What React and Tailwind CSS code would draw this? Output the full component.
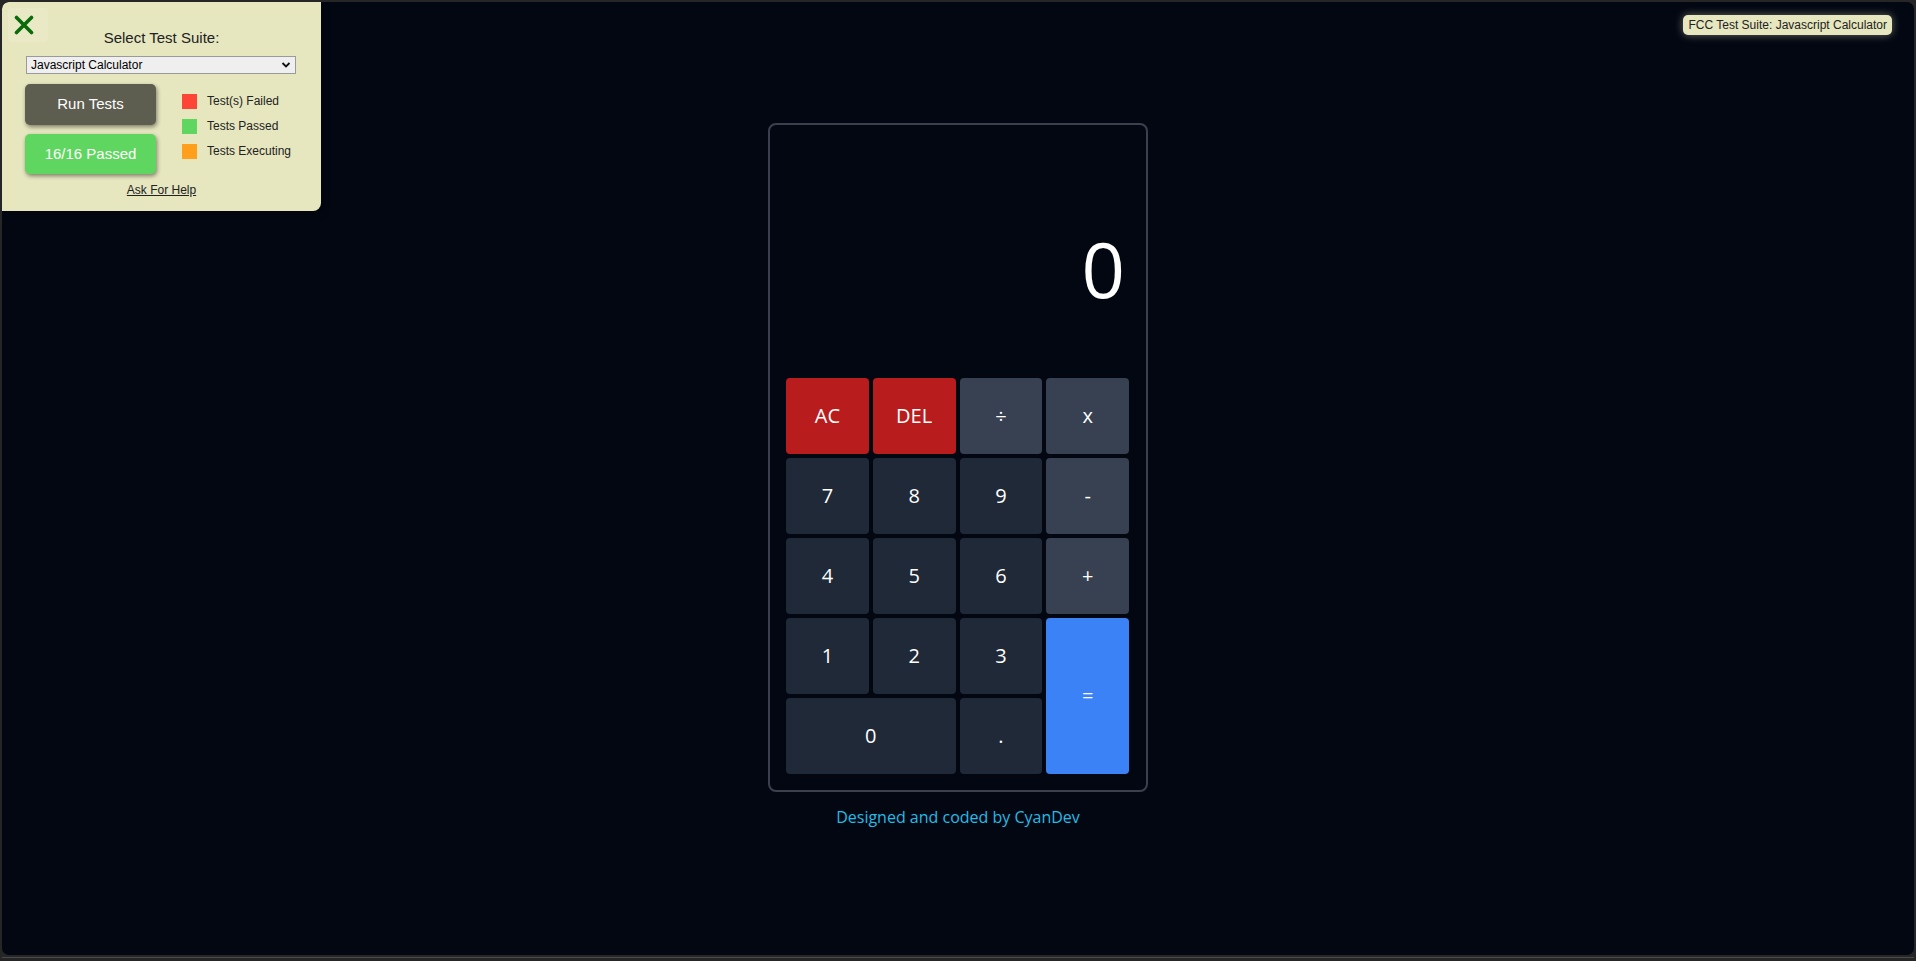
import { useState } from "react";

// Calculator keys, in grid order
const KEYS = [
  { id: "clear", label: "AC", kind: "danger" },
  { id: "delete", label: "DEL", kind: "danger" },
  { id: "divide", label: "÷", kind: "op" },
  { id: "multiply", label: "x", kind: "op" },
  { id: "seven", label: "7" },
  { id: "eight", label: "8" },
  { id: "nine", label: "9" },
  { id: "subtract", label: "-", kind: "op" },
  { id: "four", label: "4" },
  { id: "five", label: "5" },
  { id: "six", label: "6" },
  { id: "add", label: "+", kind: "op" },
  { id: "one", label: "1" },
  { id: "two", label: "2" },
  { id: "three", label: "3" },
  { id: "equals", label: "=", kind: "equals" },
  { id: "zero", label: "0", kind: "wide" },
  { id: "decimal", label: "." },
];

function keyClass(kind) {
  if (kind === "danger") return "bg-[#b91c1c]";
  if (kind === "op") return "bg-[#374151]";
  if (kind === "equals") return "bg-[#3b82f6] row-span-2";
  if (kind === "wide") return "bg-[#1f2937] col-span-2";
  return "bg-[#1f2937]";
}

function Calculator() {
  const [display] = useState("0");

  return (
    <div className="flex flex-col items-center pt-[121px] font-['Open_Sans',sans-serif]">
      <div className="w-[380px] border-2 border-[#3a404e] rounded-lg pl-[16px] pr-[17px] pb-[16px]">
        {/* Pantalla */}
        <div className="h-[253px] flex items-end justify-end pr-[4px] pb-[71px]">
          <div id="display" className="text-white text-[76px] leading-none">
            {display}
          </div>
        </div>

        {/* Teclado */}
        <div className="grid grid-cols-4 auto-rows-[76px] gap-1">
          {KEYS.map((k) => (
            <button
              key={k.id}
              id={k.id}
              className={`${keyClass(k.kind)} rounded text-white text-xl flex items-center justify-center`}
            >
              {k.label}
            </button>
          ))}
        </div>
      </div>
      <p className="mt-[13px] text-base leading-6 text-[#22bce6]">
        Designed and coded by CyanDev
      </p>
    </div>
  );
}

function TestPanel() {
  return (
    <div className="absolute top-0 left-0 w-[319px] h-[209px] bg-[#e6e6bf] rounded-tl-[6px] rounded-br-lg shadow-[2px_2px_6px_rgba(0,0,0,0.5)] font-['Liberation_Sans',Arial,sans-serif] text-[#222]">
      <button className="absolute top-[6px] left-[6px] w-[40px] h-[34px] bg-[#e9e9c6] rounded flex items-center justify-start pl-[6px]">
        <svg width="20" height="20" viewBox="0 0 20 20">
          <path d="M2.5 2.5 L17.5 17.5 M17.5 2.5 L2.5 17.5" stroke="#0b6b0b" strokeWidth="3.6" strokeLinecap="round" />
        </svg>
      </button>

      <div className="pt-[27px] text-center text-[15px] leading-[18px]">Select Test Suite:</div>

      <div className="mt-[9px] ml-[24px] w-[270px] h-[18px] bg-[#efefef] border border-[#9a9a9a] flex items-center justify-between pl-[4px] pr-[4px] text-[12px] leading-none text-black">
        <span>Javascript Calculator</span>
        <svg width="10" height="8" viewBox="0 0 10 8">
          <path d="M1.5 2 L5 5.5 L8.5 2" stroke="#111" strokeWidth="1.8" fill="none" />
        </svg>
      </div>

      <div className="mt-[10px] flex">
        <div className="ml-[23px] w-[131px] flex flex-col gap-[9px]">
          <button className="h-[41px] rounded-[5px] bg-[#5d5d50] text-white text-[15px] shadow-[1px_2px_4px_rgba(0,0,0,0.45)]">
            Run Tests
          </button>
          <button className="h-[40px] rounded-[5px] bg-[#5fd65f] text-white text-[15px] shadow-[1px_2px_4px_rgba(0,0,0,0.45)]">
            16/16 Passed
          </button>
        </div>
        <div className="ml-[26px] pt-[10px] flex flex-col gap-[10px] text-[12px] leading-[15px]">
          <div className="flex items-center">
            <span className="w-[15px] h-[15px] bg-[#fc4437]" />
            <span className="ml-[10px]">Test(s) Failed</span>
          </div>
          <div className="flex items-center">
            <span className="w-[15px] h-[15px] bg-[#5fd65f]" />
            <span className="ml-[10px]">Tests Passed</span>
          </div>
          <div className="flex items-center">
            <span className="w-[15px] h-[15px] bg-[#ff9f1c]" />
            <span className="ml-[10px]">Tests Executing</span>
          </div>
        </div>
      </div>

      <div className="mt-[9px] text-center text-[12px] leading-[14px] underline">Ask For Help</div>
    </div>
  );
}

export default function App() {
  return (
    <div className="h-[961px] bg-[#262626] pt-[2px] px-[2px] flex flex-col">
      <div className="relative h-[953px] bg-[#030712] rounded-[7px] overflow-hidden">
        <TestPanel />

        <div className="absolute top-[13px] right-[22px] h-[20px] px-[5px] flex items-center bg-[#e6e6bf] rounded-[5px] text-[12px] text-[#222] font-['Liberation_Sans',Arial,sans-serif] shadow-[0_0_8px_rgba(230,230,191,0.45)]">
          FCC Test Suite: Javascript Calculator
        </div>

        <Calculator />
      </div>
      <div className="mt-[2px] h-[1px] bg-[#4a4a4a]" />
    </div>
  );
}
